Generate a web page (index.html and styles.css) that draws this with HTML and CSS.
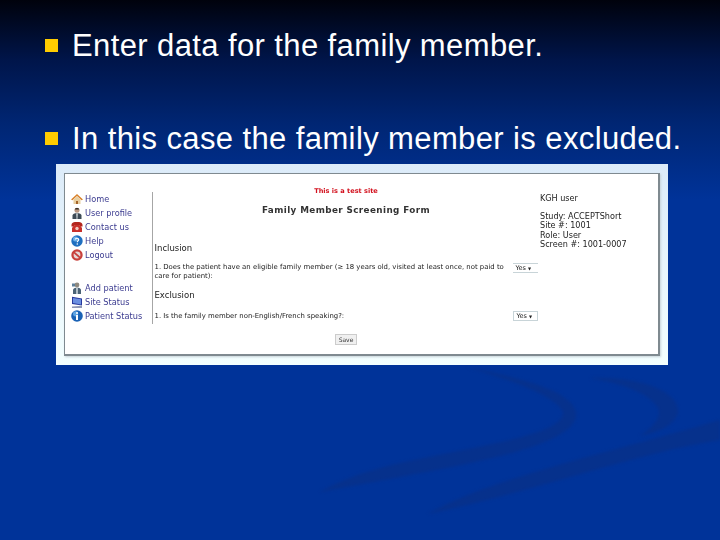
FILE: index.html
```html
<!DOCTYPE html>
<html lang="en">
<head>
  <meta charset="UTF-8" />
  <title>Family member screening</title>
  <link rel="stylesheet" href="styles.css">
</head>
<body>
  <svg class="swoosh" width="720" height="540" viewBox="0 0 720 540">
    <path d="M467 367 C520 378 580 392 576 417 C570 445 480 462 400 477 L320 492 C350 475 380 468 400 463 C480 445 565 435 563 412 C555 395 510 380 467 367Z" />
    <path d="M590 378 C640 376 680 392 678 412 C676 424 660 432 640 436 C652 428 662 418 658 408 C650 394 625 384 590 378Z" />
    <path d="M720 420 L720 440 C640 452 540 490 428 514 C490 478 620 450 720 420Z" />
  </svg>

  <ul class="bullets">
    <li>Enter data for the family member.</li>
    <li>In this case the family member is excluded.</li>
  </ul>

  <div class="shot">
    <div class="frame">
      <nav class="nav">
        <div class="nav-group">
          <a class="nav-item">
            <svg viewBox="0 0 12 12"><path d="M0 6.500 6 1l6 5.500-1.500.7L6 3 1.500 7.200Z" fill="#d9822b"/><path d="M2.500 6.500 6 3.500l3.500 3V11h-7Z" fill="#e8cfa0"/><path d="M5 8h2v3H5Z" fill="#a5652a"/></svg>
            Home
          </a>
          <a class="nav-item">
            <svg viewBox="0 0 12 12"><circle cx="6" cy="3.300" r="2.500" fill="#b99680"/><path d="M3.800 2.500C4 .6 8 .6 8.200 2.500Z" fill="#3b3026"/><path d="M1.500 12V8.500C1.500 6.800 3.500 6.200 6 6.200s4.500.6 4.500 2.300V12Z" fill="#3c4a55"/><path d="M5.300 6.500h1.400L6.400 12h-.8Z" fill="#e8eef0"/></svg>
            User profile
          </a>
          <a class="nav-item">
            <svg viewBox="0 0 12 12"><path d="M.5 4C.5 1.500 3 1 6 1s5.500.5 5.500 3v1.500H8.800V4H3.200v1.500H.5Z" fill="#b3261e"/><path d="M2.500 5 3.500 4h5l1 1 1.500 2v4H1V7Z" fill="#c9302a"/><circle cx="6" cy="7.500" r="1.700" fill="#f2c9c0"/></svg>
            Contact us
          </a>
          <a class="nav-item">
            <svg viewBox="0 0 12 12"><circle cx="6" cy="6" r="5.700" fill="#1f6fc0"/><circle cx="4.500" cy="4" r="2.500" fill="#6fb2e8"/><path d="M4.300 4.500C4.400 2.800 7.700 2.800 7.700 4.600 7.700 5.900 6.300 5.800 6.300 7.200" fill="none" stroke="#fff" stroke-width="1.200"/><circle cx="6.300" cy="9" r=".8" fill="#fff"/></svg>
            Help
          </a>
          <a class="nav-item">
            <svg viewBox="0 0 12 12"><circle cx="6" cy="6" r="5.700" fill="#c8403c"/><circle cx="6" cy="6" r="3.400" fill="#e6d8d8"/><path d="M2.500 2.800 9.500 9.200" stroke="#c8403c" stroke-width="1.800"/></svg>
            Logout
          </a>
        </div>
        <div class="nav-group">
          <a class="nav-item">
            <svg viewBox="0 0 12 12"><circle cx="6" cy="3" r="2.400" fill="#8f8a80"/><path d="M2 12V8C2 6.400 4 5.800 6 5.800S10 6.400 10 8v4Z" fill="#4a6275"/><path d="M1 1.500h3v3H1Z" fill="#5d7f9a"/><path d="M5.300 6h1.400v6H5.300Z" fill="#e0e8ec"/></svg>
            Add patient
          </a>
          <a class="nav-item">
            <svg viewBox="0 0 12 12"><path d="M1 .8 11 2.500v7L1 8Z" fill="#27389c"/><path d="M2 2 10 3.300V8.400L2 7.100Z" fill="#6b8fe0"/><path d="M1 10.500 11 9.800V12H1Z" fill="#8f97b5"/></svg>
            Site Status
          </a>
          <a class="nav-item">
            <svg viewBox="0 0 12 12"><circle cx="6" cy="6" r="5.800" fill="#1a62b5"/><circle cx="4.600" cy="3.800" r="2.600" fill="#5fa5e3"/><circle cx="6" cy="3" r="1" fill="#fff"/><path d="M5 5h2v5H5Z" fill="#fff"/></svg>
            Patient Status
          </a>
        </div>
      </nav>

      <main class="form">
        <p class="test-site">This is a test site</p>
        <h1 class="form-title">Family Member Screening Form</h1>
        <h2 class="section inclusion">Inclusion</h2>
        <div class="question">
          <p>1. Does the patient have an eligible family member (≥ 18 years old, visited at least once, not paid to care for patient):</p>
          <span class="select flat">Yes <i>▼</i></span>
        </div>
        <h2 class="section exclusion">Exclusion</h2>
        <div class="question single">
          <p>1. Is the family member non-English/French speaking?:</p>
          <span class="select">Yes <i>▼</i></span>
        </div>
        <button class="save">Save</button>
      </main>

      <aside class="info">
        <p class="who">KGH user</p>
        <p>Study: ACCEPTShort</p>
        <p>Site #: 1001</p>
        <p>Role: User</p>
        <p>Screen #: 1001-0007</p>
      </aside>
    </div>
  </div>
</body>
</html>
```

FILE: styles.css
```css
html, body {
  height: 100%;
}

body {
  margin: 0;
  height: 540px;
  overflow: hidden;
  position: relative;
  background: linear-gradient(#00020c 0, #00154a 60px, #002674 125px, #003399 200px);
  font-family: 'Liberation Sans', Arial, sans-serif;
}

.swoosh {
  position: absolute;
  left: 0;
  top: 0;
  filter: blur(1.5px);
}

.swoosh path {
  fill: #06318c;
}

.bullets {
  position: relative;
  list-style: none;
  margin: 0;
  padding: 26px 0 0 45px;
}

.bullets li {
  display: flex;
  align-items: center;
  gap: 14px;
  height: 39px;
  margin-bottom: 54px;
  color: #fff;
  font-size: 31px;
  letter-spacing: 0.39px;
  white-space: nowrap;
}

.bullets li:last-child {
  margin-bottom: 0;
}

.bullets li::before {
  content: "";
  width: 13px;
  height: 13px;
  background: #ffcc00;
  flex: none;
}

.shot {
  position: relative;
  width: 596px;
  height: 183px;
  margin: 6px 0 0 56px;
  padding: 9px 8px;
  background: linear-gradient(#dcebf9, #f3ffff);
}

.frame {
  display: flex;
  height: 183px;
  box-sizing: border-box;
  background: #fff;
  border: 1px solid #7f8a90;
  border-width: 1px 2px 2px 1px;
  box-shadow: 1px 1px 2px #c6d2d8;
  color: #222;
  font-family: 'DejaVu Sans', Verdana, sans-serif;
  filter: blur(0.45px);
}

.nav {
  width: 81px;
  height: 132px;
  margin: 18px 0 0 6px;
  border-right: 1px solid #a6a6a6;
  flex: none;
}

.nav-group {
  margin-bottom: 19px;
}

.nav-item {
  display: flex;
  align-items: center;
  gap: 2px;
  height: 14px;
  font-size: 8.200px;
  color: #3c3c90;
  white-space: nowrap;
}

.nav-item svg {
  width: 12px;
  height: 12px;
  flex: none;
}

.form {
  width: 387px;
  flex: none;
  padding: 12px 2.500px 0 1.500px;
  box-sizing: border-box;
}

.test-site {
  margin: 0;
  text-align: center;
  font-size: 6.600px;
  font-weight: bold;
  line-height: 10px;
  color: #d3121f;
}

.form-title {
  margin: 9px 0 0;
  text-align: center;
  font-size: 8.800px;
  font-weight: bold;
  line-height: 11px;
  letter-spacing: 0.4px;
  color: #333;
}

.section {
  margin: 0;
  font-size: 8.500px;
  font-weight: normal;
  line-height: 11px;
}

.inclusion {
  margin-top: 27px;
}

.exclusion {
  margin-top: 9px;
}

.question {
  display: flex;
  align-items: flex-start;
  justify-content: space-between;
  margin-top: 9px;
  font-size: 6.900px;
  line-height: 9px;
}

.question p {
  width: 355px;
  margin: 0;
}

.question.single {
  margin-top: 10px;
  align-items: center;
}

.select {
  width: 25px;
  height: 10px;
  box-sizing: border-box;
  border: 1px solid #c8d4d8;
  font-size: 6.500px;
  line-height: 8px;
  padding-left: 3px;
  white-space: nowrap;
}

.select.flat {
  border-width: 1px 0;
}

.select i {
  font-style: normal;
  font-size: 4px;
}

.save {
  display: block;
  width: 22px;
  height: 11px;
  margin: 13px auto 0;
  padding: 0;
  border: 1px solid #ccc;
  background: #f0f0f0;
  font-family: inherit;
  font-size: 6px;
  color: #333;
}

.info {
  flex: 1;
  padding-top: 20px;
  font-size: 8.100px;
  line-height: 9.500px;
}

.info p {
  margin: 0;
  white-space: nowrap;
}

.info .who {
  margin-bottom: 8px;
}
```
